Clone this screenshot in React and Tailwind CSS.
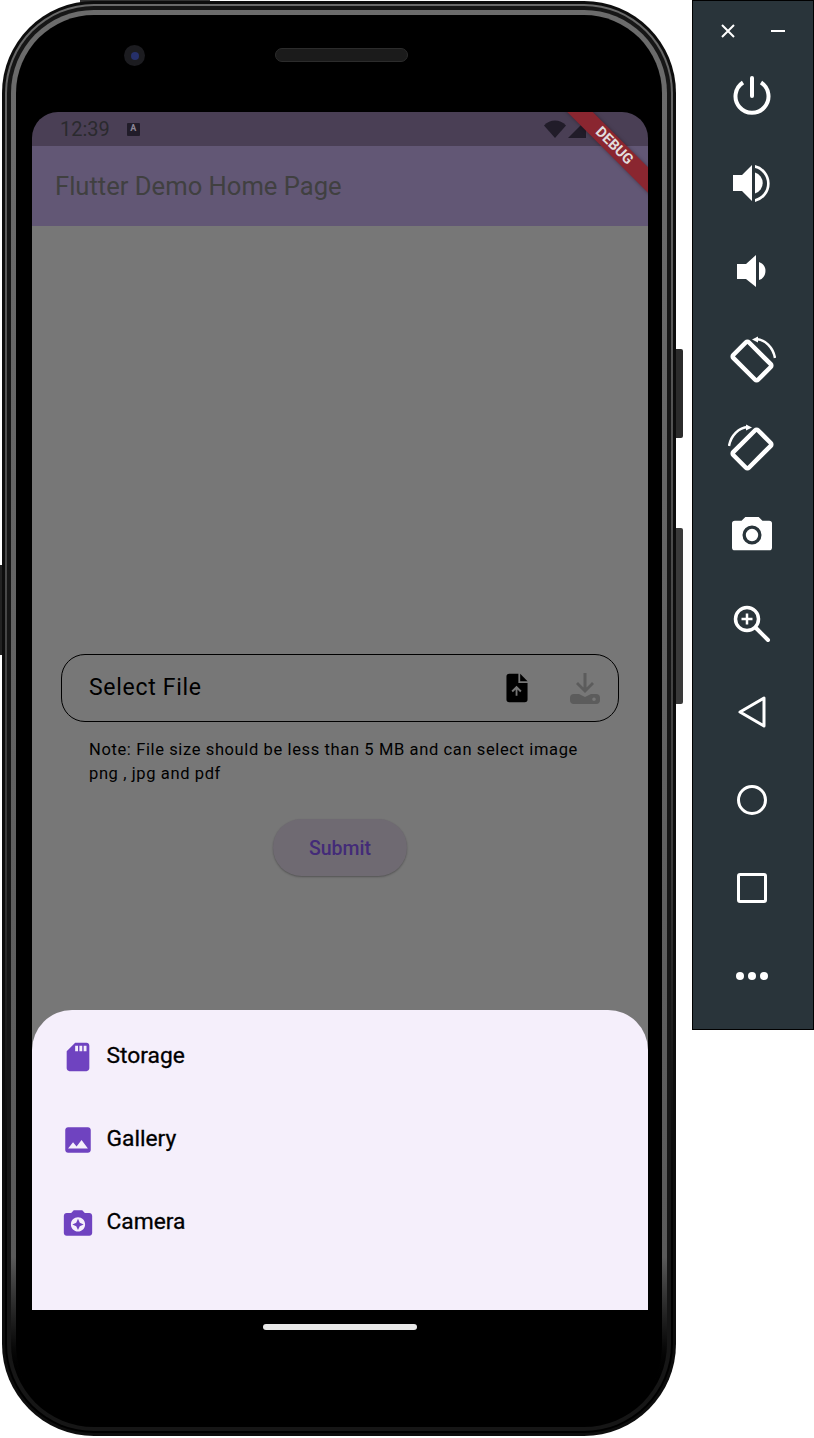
import React from "react";

const roboto = "font-['Roboto',sans-serif]";

// --- emulator toolbar icons ---
function PowerIcon() {
  return (
    <svg width="40" height="40" viewBox="0 0 40 40" fill="none" stroke="white" strokeWidth="4">
      <path d="M20 2v18" strokeLinecap="round" />
      <path d="M11 6.5a16.5 16.5 0 1 0 18 0" />
    </svg>
  );
}

function VolumeUpIcon() {
  return (
    <svg width="40" height="40" viewBox="0 0 40 40" fill="white">
      <path d="M1 11h9L20 1v36L10 27H1z" />
      <path d="M23 8.5a11 11 0 0 1 0 21z" />
      <path d="M23 1a19 19 0 0 1 0 37v-3a16 16 0 0 0 0-31z" />
    </svg>
  );
}

function VolumeDownIcon() {
  return (
    <svg width="32" height="36" viewBox="0 0 32 36" fill="white">
      <path d="M1 10h9L20 1v32L10 25H1z" />
      <path d="M23 8a9.500 9.500 0 0 1 0 18z" />
    </svg>
  );
}

function RotateIcon({ flip }) {
  return (
    <svg width="48" height="48" viewBox="0 0 48 48" fill="none" stroke="white" className={flip ? "-scale-x-100" : ""}>
      <rect x="6.500" y="14" width="35" height="22" rx="2" strokeWidth="4.500" strokeLinejoin="round" transform="rotate(45 24 25)" />
      <path d="M28 3c9 .5 17 8 19 19" strokeWidth="2.500" />
      <path d="M24 3.500l6-3v6z" fill="white" strokeWidth="0" />
    </svg>
  );
}

function CameraToolIcon() {
  return (
    <svg width="40" height="40" viewBox="0 1 42 42" fill="white">
      <path fillRule="evenodd" d="M14 2h14l4 4h7a3 3 0 0 1 3 3v25a3 3 0 0 1-3 3H3a3 3 0 0 1-3-3V9a3 3 0 0 1 3-3h7zM21 11a10 10 0 1 0 0 20 10 10 0 0 0 0-20z" />
      <circle cx="21" cy="21" r="6.500" />
    </svg>
  );
}

function ZoomIcon() {
  return (
    <svg width="38" height="38" viewBox="0 0 38 38" fill="none" stroke="white" strokeWidth="3.500">
      <circle cx="14" cy="14" r="11.500" />
      <path d="M23 23l12 12" strokeWidth="4" strokeLinecap="round" />
      <path d="M14 8.500v11M8.500 14h11" strokeWidth="2.500" />
    </svg>
  );
}

// --- status bar icons ---
function WifiIcon() {
  return (
    <svg width="22" height="18" viewBox="0 0 22 18" fill="#211c29">
      <path d="M0 5.500C3 2 7 .5 11 .5s8 1.500 11 5L11 18z" />
    </svg>
  );
}

function SignalIcon() {
  return (
    <svg width="19" height="18" viewBox="0 0 19 18" fill="#211c29">
      <path d="M18 0v18H0z" />
    </svg>
  );
}

// --- app icons ---
function UploadFileIcon() {
  return (
    <svg width="22" height="30" viewBox="0 0 24 31">
      <path d="M3 0h10v10h10v18a3 3 0 0 1-3 3H3a3 3 0 0 1-3-3V3a3 3 0 0 1 3-3z" fill="black" transform="translate(0.500 0)" />
      <path d="M15.500 0l8 8h-8z" fill="black" />
      <path d="M11.500 13l5.500 5.500-1.500 1.500-3-3v7h-2v-7l-3 3-1.500-1.500z" fill="#757575" />
    </svg>
  );
}

function DownloadTrayIcon() {
  return (
    <svg width="30" height="31" viewBox="0 0 30 31" fill="#5c5c5c">
      <path d="M13.500 0h3v14.500l5.500-5.500 2 2-9 9-9-9 2-2 5.500 5.500z" />
      <path fillRule="evenodd" d="M4 21h5l6 3 6-3h5a4 4 0 0 1 4 4v2a4 4 0 0 1-4 4H4a4 4 0 0 1-4-4v-2a4 4 0 0 1 4-4zm20 3.500a1.800 1.800 0 1 0 0 3.600 1.800 1.800 0 0 0 0-3.600z" />
    </svg>
  );
}

function StorageIcon() {
  return (
    <svg width="34" height="34" viewBox="0 0 24 24" fill="#6f43c0">
      <path d="M18 2h-8L4.020 8 4 20c0 1.100.9 2 2 2h12c1.100 0 2-.9 2-2V4c0-1.100-.9-2-2-2zm-6 6h-2V4h2v4zm3 0h-2V4h2v4zm3 0h-2V4h2v4z" />
    </svg>
  );
}

function GalleryIcon() {
  return (
    <svg width="34" height="34" viewBox="0 0 24 24" fill="#6f43c0">
      <path d="M21 19V5c0-1.100-.9-2-2-2H5c-1.100 0-2 .9-2 2v14c0 1.100.9 2 2 2h14c1.100 0 2-.9 2-2zM8.500 13.500l2.500 3.010L14.500 12l4.500 6H5l3.500-4.500z" />
    </svg>
  );
}

function CameraIcon() {
  return (
    <svg width="34" height="34" viewBox="0 0 24 24" fill="#6f43c0">
      <path d="M9 3L7.170 5H4c-1.100 0-2 .9-2 2v12c0 1.100.9 2 2 2h16c1.100 0 2-.9 2-2V7c0-1.100-.9-2-2-2h-3.170L15 3H9zm3 15c-2.760 0-5-2.240-5-5s2.240-5 5-5 5 2.240 5 5-2.240 5-5 5zm0-1l1.250-2.750L16 13l-2.750-1.250L12 9l-1.250 2.750L8 13l2.750 1.250z" />
    </svg>
  );
}

function SheetItem({ icon, label }) {
  return (
    <div className="flex items-center h-[83px]">
      <div className="flex justify-center w-[34px] shrink-0">{icon}</div>
      <span className="ml-[11.500px] text-[22.8px] [-webkit-text-stroke:0.3px_black] text-black">{label}</span>
    </div>
  );
}

function Screen() {
  return (
    <div className={`relative flex flex-col ml-[2px] w-[616px] h-[1232px] overflow-hidden rounded-[26px] bg-black ${roboto}`}>
      {/* status bar */}
      <div className="flex items-center h-[34px] bg-[#4a3f55] pl-[28px] pr-[61px]">
        <span className="text-[20px] text-[#2a2a2e]">12:39</span>
        <div className="flex items-center justify-center ml-[17px] w-[13px] h-[13px] rounded-[1px] bg-[#211c29] text-[9px] font-bold text-[#8d8796]">A</div>
        <div className="flex items-center gap-[2px] ml-auto">
          <WifiIcon />
          <SignalIcon />
        </div>
      </div>
      {/* app bar */}
      <div className="flex items-center h-[80px] bg-[#625775] pl-[23px]">
        <span className="text-[25.6px] text-[#404040]">Flutter Demo Home Page</span>
      </div>
      {/* body */}
      <div className="flex flex-col h-[1084px] bg-[#777777] pt-[428px] px-[29px]">
        <div className="flex items-center h-[68px] rounded-[24px] border-[1.500px] border-black pl-[27px] pr-[18px]">
          <span className="text-[23px] tracking-[0.7px] text-black">Select File</span>
          <div className="flex items-center gap-[42px] ml-auto">
            <UploadFileIcon />
            <DownloadTrayIcon />
          </div>
        </div>
        <p className="mt-[16px] pl-[28px] text-[16.500px] leading-[24px] tracking-[0.62px] text-black">
          Note: File size should be less than 5 MB and can select image
          <br />
          png , jpg and pdf
        </p>
        <button className="self-center flex items-center justify-center mt-[33px] pt-[2px] w-[134px] h-[57px] rounded-full bg-[#6f6a72] shadow-[0_1px_2px_rgba(0,0,0,0.3)] text-[19.500px] font-medium text-[#432b78]">
          Submit
        </button>
      </div>
      <div className="flex-1 bg-black" />

      {/* bottom sheet */}
      <div className="absolute left-0 right-0 top-[898px] h-[300px] rounded-t-[40px] bg-[#f5effb] pl-[29px] pt-[5px]">
        <SheetItem icon={<StorageIcon />} label="Storage" />
        <SheetItem icon={<GalleryIcon />} label="Gallery" />
        <SheetItem icon={<CameraIcon />} label="Camera" />
      </div>

      {/* debug banner */}
      <div className="absolute left-[482px] top-[25px] flex items-center justify-center w-[200px] h-[18px] rotate-45 bg-[#8a2630] shadow-[0_0_4px_rgba(0,0,0,0.35)] text-[14.5px] font-bold text-[#e2dede]">
        DEBUG
      </div>

      {/* home indicator */}
      <div className="absolute left-[231px] top-[1212px] w-[154px] h-[6px] rounded-full bg-[#e8e8e8]" />
    </div>
  );
}

function Phone() {
  return (
    <div className="relative w-[692px] h-[1438px] shrink-0">
      {/* side buttons */}
      <div className="absolute left-[674px] top-[349px] w-[9px] h-[89px] rounded-r-[2px] bg-[#2b2b2b]" />
      <div className="absolute left-[674px] top-[528px] w-[9px] h-[176px] rounded-r-[2px] bg-[#3a3a3a]" />
      <div className="absolute left-0 top-[565px] w-[4px] h-[90px] bg-[#222222]" />
      <div className="absolute left-[80px] top-0 w-[130px] h-[4px] bg-[#333333]" />

      <div className="absolute left-[2px] top-[1px] w-[674px] h-[1435px] rounded-[92px] bg-[#0d0d0d] p-[3px]">
        <div className="w-full h-full rounded-[89px] bg-linear-to-b from-[#6a6a6a] via-[#3a3a3a] via-60% to-black to-95% p-[2px]">
          <div className="w-full h-full rounded-[87px] bg-[#161616] p-[4px]">
            <div className="w-full h-full rounded-[83px] bg-linear-to-b from-[#6c6c6c] via-[#5a5a5a] via-88% to-black to-97% p-[5px]">
              <div className="relative flex flex-col items-center w-full h-full rounded-[78px] bg-black pt-[97px]">
                {/* camera + speaker */}
                <div className="absolute left-[108px] top-[30px] flex items-center justify-center w-[21px] h-[21px] rounded-full bg-[#1c1c20]">
                  <div className="w-[8px] h-[8px] rounded-full bg-[#26306a]" />
                </div>
                <div className="absolute left-[259px] top-[33px] w-[133px] h-[14px] rounded-full bg-[#1b1b1b] border border-[#2c2c2c]" />
                <Screen />
              </div>
            </div>
          </div>
        </div>
      </div>
    </div>
  );
}

function ToolSlot({ children }) {
  return <div className="flex items-center justify-center h-[88px]">{children}</div>;
}

function Toolbar() {
  return (
    <div className="flex flex-col w-[122px] h-[1030px] bg-[#29343a] border-[1.500px] border-black pr-[2px]">
      <div className="flex items-center justify-between h-[51px] pl-[27px] pr-[26px] pt-[8px]">
        <svg width="16" height="16" viewBox="0 0 16 16" stroke="white" strokeWidth="2">
          <path d="M2 2l12 12M14 2L2 14" />
        </svg>
        <div className="w-[14px] h-[2px] bg-white" />
      </div>
      <ToolSlot><PowerIcon /></ToolSlot>
      <ToolSlot><VolumeUpIcon /></ToolSlot>
      <ToolSlot><VolumeDownIcon /></ToolSlot>
      <ToolSlot><RotateIcon /></ToolSlot>
      <ToolSlot><RotateIcon flip /></ToolSlot>
      <ToolSlot><CameraToolIcon /></ToolSlot>
      <ToolSlot><ZoomIcon /></ToolSlot>
      <ToolSlot>
        <svg width="28" height="32" viewBox="0 0 28 32" fill="none" stroke="white" strokeWidth="3" strokeLinejoin="round">
          <path d="M26 2v28L2 16z" />
        </svg>
      </ToolSlot>
      <ToolSlot>
        <div className="w-[30px] h-[30px] rounded-full border-[3px] border-white" />
      </ToolSlot>
      <ToolSlot>
        <div className="w-[30px] h-[30px] rounded-[3px] border-[3px] border-white" />
      </ToolSlot>
      <ToolSlot>
        <div className="flex gap-[4px]">
          <div className="w-[8px] h-[8px] rounded-full bg-white" />
          <div className="w-[8px] h-[8px] rounded-full bg-white" />
          <div className="w-[8px] h-[8px] rounded-full bg-white" />
        </div>
      </ToolSlot>
    </div>
  );
}

export default function App() {
  return (
    <div className="flex items-start w-[814px] h-[1438px] overflow-hidden bg-white">
      <Phone />
      <Toolbar />
    </div>
  );
}
